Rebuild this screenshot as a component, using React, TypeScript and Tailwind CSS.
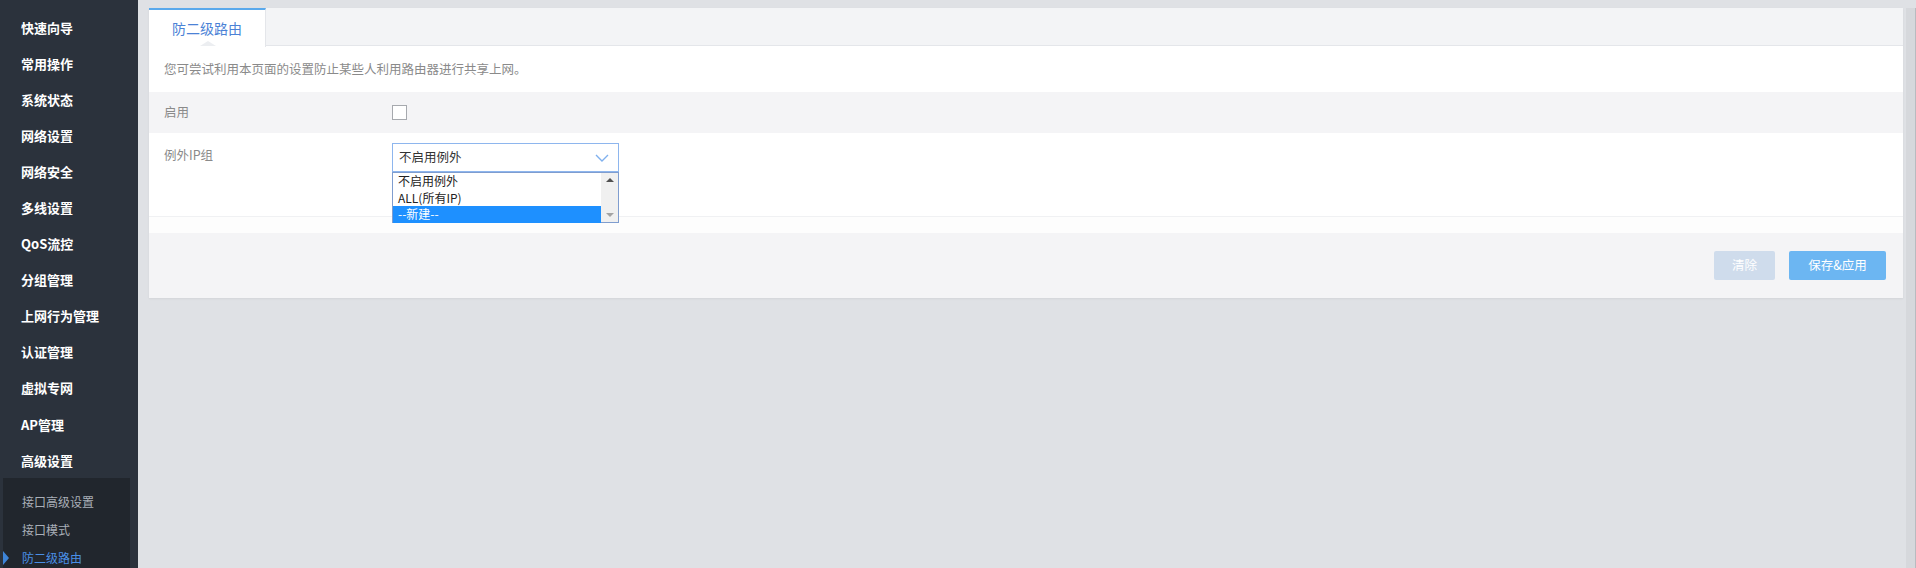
import React from "react";

const font = { fontFamily: '"Noto Sans CJK SC", "Noto Sans", sans-serif' };

const menu = [
  "快速向导",
  "常用操作",
  "系统状态",
  "网络设置",
  "网络安全",
  "多线设置",
  "QoS流控",
  "分组管理",
  "上网行为管理",
  "认证管理",
  "虚拟专网",
  "AP管理",
  "高级设置",
];

export default function App() {
  return (
    <div className="flex h-[568px] w-[1916px] overflow-hidden bg-[#dfe1e5]" style={font}>
      {/* Sidebar */}
      <div className="flex w-[138px] shrink-0 flex-col bg-[#2b323c] pt-[9px]">
        {menu.map((m) => (
          <div key={m} className="flex h-[36.1px] shrink-0 items-center pl-[21px] text-[13px] font-bold leading-none text-white">
            {m}
          </div>
        ))}
        <div className="ml-[3px] flex w-[127px] flex-1 flex-col bg-[#21262d] pt-[10px]">
          <div className="flex h-[28px] items-center pl-[19px] text-[12px] leading-none text-[#a9afb8]">接口高级设置</div>
          <div className="flex h-[28px] items-center pl-[19px] text-[12px] leading-none text-[#a9afb8]">接口模式</div>
          <div className="relative flex h-[28px] items-center pl-[19px] text-[12px] leading-none text-[#4a8fe6]">
            <span className="absolute left-0 top-[7px] h-0 w-0 border-y-[7px] border-l-[6px] border-y-transparent border-l-[#3d84d8]" />
            防二级路由
          </div>
        </div>
      </div>

      {/* Main */}
      <div className="flex flex-1 pl-[11px] pt-[8px]">
        <div className="flex h-[290px] w-[1754px] flex-col bg-white shadow-[0_1px_2px_rgba(0,0,0,0.06)]">
          {/* tab header */}
          <div className="flex h-[38px] border-b border-[#e4e6ea] bg-[#f3f4f6]">
            <div className="relative flex h-[39px] w-[117px] items-center justify-center border-r border-[#e4e6ea] border-t-2 border-t-[#5aa9ec] bg-white pb-[2px] text-[14px] leading-none text-[#4b82d6]">
              防二级路由
              <span className="absolute bottom-[1px] left-[51px] h-0 w-0 border-x-[8px] border-b-[5px] border-x-transparent border-b-[#eceef1]" />
            </div>
          </div>
          {/* description */}
          <div className="flex h-[46px] items-center pl-[15px] text-[12.5px] leading-none text-[#8a8a8a]">
            您可尝试利用本页面的设置防止某些人利用路由器进行共享上网。
          </div>
          {/* enable row */}
          <div className="flex h-[41px] items-center bg-[#f4f4f6] pl-[15px]">
            <div className="w-[228px] text-[12.5px] leading-none text-[#8a8a8a]">启用</div>
            <div className="h-[15px] w-[15px] border border-[#a6a9ae] bg-white" />
          </div>
          {/* exception row */}
          <div className="flex h-[84px] items-start border-b border-[#f0f1f3] pl-[15px] pt-[10px]">
            <div className="w-[228px] pt-[6px] text-[12.5px] leading-none text-[#8a8a8a]">例外IP组</div>
            <div className="relative">
              <div className="flex h-[29px] w-[227px] items-center justify-between border border-[#8eb6ee] bg-white pl-[6px] pr-[9px] text-[12.5px] text-[#333]">
                <span>不启用例外</span>
                <svg width="14" height="8" viewBox="0 0 14 8" fill="none">
                  <path d="M1 1 L7 7 L13 1" stroke="#7fb0ee" strokeWidth="1.4" />
                </svg>
              </div>
              <div className="absolute left-0 top-[29px] z-10 flex h-[51px] w-[227px] border border-[#7f9dcf] bg-white text-[12px] leading-[16.5px]">
                <div className="flex flex-1 flex-col">
                  <div className="h-[16.5px] pl-[5px] text-[#222]">不启用例外</div>
                  <div className="h-[16.5px] pl-[5px] text-[#222]">ALL(所有IP)</div>
                  <div className="h-[16.5px] bg-[#1e90ff] pl-[5px] text-white">--新建--</div>
                </div>
                <div className="flex w-[17px] flex-col items-center justify-between bg-[#f0f0f0] py-[5px]">
                  <span className="h-0 w-0 border-x-[4px] border-b-[4px] border-x-transparent border-b-[#505050]" />
                  <span className="h-0 w-0 border-x-[4px] border-t-[4px] border-x-transparent border-t-[#a3a3a3]" />
                </div>
              </div>
            </div>
          </div>
          <div className="h-[16px] bg-[#fdfdfd]" />
          {/* footer */}
          <div className="flex flex-1 items-start justify-end gap-[14px] bg-[#f4f4f6] pr-[17px] pt-[18px]">
            <button className="flex h-[29px] w-[61px] items-center justify-center rounded-[2px] bg-[#cfdcec] text-[12.5px] text-white">
              清除
            </button>
            <button className="flex h-[29px] w-[97px] items-center justify-center rounded-[2px] bg-[#6cb6f2] text-[12.5px] text-white">
              保存&amp;应用
            </button>
          </div>
        </div>
        <div className="ml-[3px] h-full flex-1 border-r border-[#b8bbc0] bg-[#d6d8dc]" />
      </div>
    </div>
  );
}
